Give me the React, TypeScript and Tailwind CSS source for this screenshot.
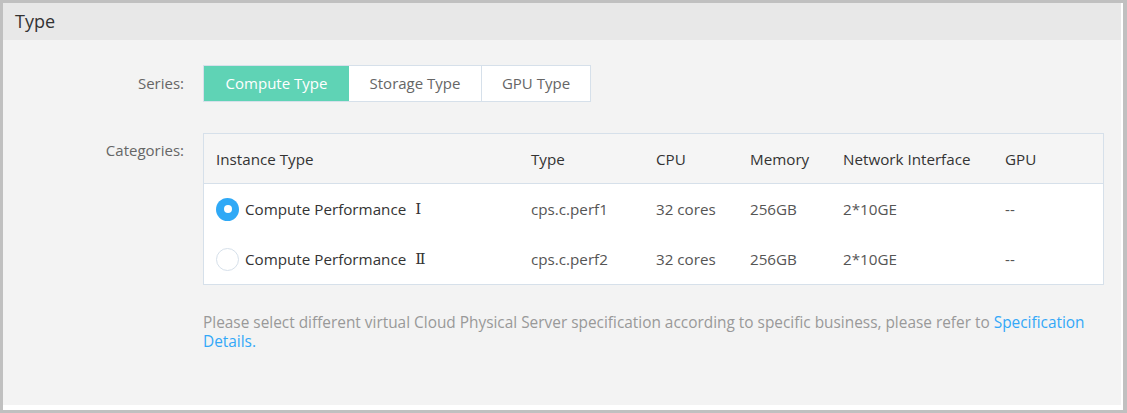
import React from "react";

const rows = [
  { name: "Compute Performance", num: "Ⅰ", type: "cps.c.perf1", cpu: "32 cores", mem: "256GB", net: "2*10GE", gpu: "--", sel: true },
  { name: "Compute Performance", num: "Ⅱ", type: "cps.c.perf2", cpu: "32 cores", mem: "256GB", net: "2*10GE", gpu: "--", sel: false },
];

export default function App() {
  return (
    <div
      className="w-[1127px] h-[413px] bg-[#c0c0c0] pt-[3px] pl-[3px] pr-[4px] pb-[3px]"
      style={{ fontFamily: '"Open Sans", "Noto Sans", sans-serif' }}
    >
      <div className="h-full bg-white pr-[2px] pb-[5px]">
        <div className="h-full bg-[#f3f3f3] flex flex-col">
          <div className="h-[37px] bg-[#e8e8e8] flex items-center pl-[12px] text-[18px] text-[#333]">Type</div>
          <div className="flex pt-[25px]">
            <div className="w-[181px] text-right text-[15px] text-[#666] leading-[37px]">Series:</div>
            <div className="ml-[19px] flex border border-[#d6e0ea] h-[37px] text-[15px]">
              <div className="w-[145px] bg-[#5fd3b5] text-white flex items-center justify-center">Compute Type</div>
              <div className="w-[133px] bg-white text-[#666] flex items-center justify-center border-r border-[#d6e0ea]">Storage Type</div>
              <div className="w-[108px] bg-white text-[#666] flex items-center justify-center">GPU Type</div>
            </div>
          </div>
          <div className="flex pt-[31px]">
            <div className="w-[181px] text-right text-[15px] text-[#666] pt-[6px]">Categories:</div>
            <div className="ml-[19px] w-[901px]">
              <div className="border border-[#d6e0ea] bg-white text-[15.2px]">
                <div className="h-[50px] bg-[#f5f5f5] border-b border-[#d6e0ea] flex items-center pt-[2px] text-[#333]">
                  <div className="w-[327px] pl-[12px]">Instance Type</div>
                  <div className="w-[125px]">Type</div>
                  <div className="w-[94px]">CPU</div>
                  <div className="w-[93px]">Memory</div>
                  <div className="w-[162px]">Network Interface</div>
                  <div>GPU</div>
                </div>
                {rows.map((r, i) => (
                  <div key={i} className="h-[50px] flex items-center text-[#555]">
                    <div className="w-[327px] pl-[12px] flex items-center text-[#333]">
                      {r.sel ? (
                        <span className="w-[23px] h-[23px] rounded-full bg-[#2fa9f6] flex items-center justify-center">
                          <span className="w-[8px] h-[8px] rounded-full bg-white" />
                        </span>
                      ) : (
                        <span className="w-[23px] h-[23px] rounded-full bg-white border border-[#d6e0ea]" />
                      )}
                      <span className="ml-[6px]">{r.name}</span>
                      <span className="ml-[9px]" style={{ fontFamily: '"DejaVu Serif", "Liberation Serif", serif' }}>{r.num}</span>
                    </div>
                    <div className="w-[125px]">{r.type}</div>
                    <div className="w-[94px]">{r.cpu}</div>
                    <div className="w-[93px]">{r.mem}</div>
                    <div className="w-[162px]">{r.net}</div>
                    <div>{r.gpu}</div>
                  </div>
                ))}
              </div>
              <p className="mt-[28px] text-[15.4px] leading-[19px] text-[#999] pr-[10px]">
                Please select different virtual Cloud Physical Server specification according to specific business, please refer to{" "}
                <span className="text-[#33a8f8]">Specification Details.</span>
              </p>
            </div>
          </div>
        </div>
      </div>
    </div>
  );
}
